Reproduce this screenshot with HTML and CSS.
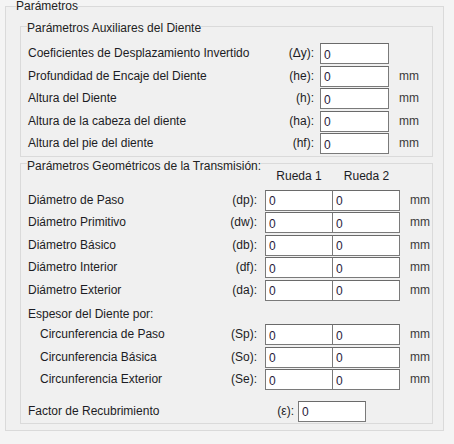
FILE: index.html
```html
<!DOCTYPE html>
<html lang="es">
<head>
  <meta charset="UTF-8">
  <title>Parámetros</title>
  <link rel="stylesheet" href="styles.css">
</head>
<body>

<fieldset class="group outer">
  <legend>Parámetros</legend>

  <fieldset class="group aux">
    <legend>Parámetros Auxiliares del Diente</legend>
    <div class="rows-aux">
      <span class="label">Coeficientes de Desplazamiento Invertido</span>
      <span class="code">(Δy):</span>
      <input class="box" type="text" value="0">
      <span class="unit"></span>

      <span class="label">Profundidad de Encaje del Diente</span>
      <span class="code">(he):</span>
      <input class="box" type="text" value="0">
      <span class="unit">mm</span>

      <span class="label">Altura del Diente</span>
      <span class="code">(h):</span>
      <input class="box" type="text" value="0">
      <span class="unit">mm</span>

      <span class="label">Altura de la cabeza del diente</span>
      <span class="code">(ha):</span>
      <input class="box" type="text" value="0">
      <span class="unit">mm</span>

      <span class="label">Altura del pie del diente</span>
      <span class="code">(hf):</span>
      <input class="box" type="text" value="0">
      <span class="unit">mm</span>
    </div>
  </fieldset>

  <fieldset class="group geo">
    <legend>Parámetros Geométricos de la Transmisión:</legend>
    <div class="rows-geo head">
      <span></span>
      <span></span>
      <span class="col-title">Rueda 1</span>
      <span class="col-title">Rueda 2</span>
      <span></span>
    </div>
    <div class="rows-geo">
      <span class="label">Diámetro de Paso</span>
      <span class="code">(dp):</span>
      <input class="box" type="text" value="0">
      <input class="box second" type="text" value="0">
      <span class="unit">mm</span>

      <span class="label">Diámetro Primitivo</span>
      <span class="code">(dw):</span>
      <input class="box" type="text" value="0">
      <input class="box second" type="text" value="0">
      <span class="unit">mm</span>

      <span class="label">Diámetro Básico</span>
      <span class="code">(db):</span>
      <input class="box" type="text" value="0">
      <input class="box second" type="text" value="0">
      <span class="unit">mm</span>

      <span class="label">Diámetro Interior</span>
      <span class="code">(df):</span>
      <input class="box" type="text" value="0">
      <input class="box second" type="text" value="0">
      <span class="unit">mm</span>

      <span class="label">Diámetro Exterior</span>
      <span class="code">(da):</span>
      <input class="box" type="text" value="0">
      <input class="box second" type="text" value="0">
      <span class="unit">mm</span>
    </div>

    <div class="subtitle">Espesor del Diente por:</div>
    <div class="rows-geo">
      <span class="label indent">Circunferencia de Paso</span>
      <span class="code">(Sp):</span>
      <input class="box" type="text" value="0">
      <input class="box second" type="text" value="0">
      <span class="unit">mm</span>

      <span class="label indent">Circunferencia Básica</span>
      <span class="code">(So):</span>
      <input class="box" type="text" value="0">
      <input class="box second" type="text" value="0">
      <span class="unit">mm</span>

      <span class="label indent">Circunferencia Exterior</span>
      <span class="code">(Se):</span>
      <input class="box" type="text" value="0">
      <input class="box second" type="text" value="0">
      <span class="unit">mm</span>
    </div>

    <div class="rows-factor">
      <span class="label">Factor de Recubrimiento</span>
      <span class="code">(ε):</span>
      <input class="box" type="text" value="0">
      <span></span>
    </div>
  </fieldset>
</fieldset>

</body>
</html>
```

FILE: styles.css
```css
body {
  margin: 0;
  background: #f4f4f4;
  font-family: "Liberation Sans", Arial, sans-serif;
  font-size: 12px;
  color: #1c1c24;
}
.group {
  border: 1px solid #dadada;
  background: #f0f0f0;
  margin: 0;
  min-width: 0;
}
.group legend {
  padding: 0;
  line-height: 14px;
  color: #222;
}
.outer {
  width: 439px;
  box-sizing: border-box;
  margin: -1px 0 0 5px;
  padding: 0 10px 6px 14px;
}
.outer > legend {
  margin-left: -4px;
}
.aux {
  margin-top: 4px;
  padding: 0 0 0 7px;
}
.aux > legend,
.geo > legend {
  margin-left: -1px;
  padding-top: 4px;
}
.geo {
  margin-top: -2px;
  padding: 0 0 0 7px;
}
.rows-aux {
  display: grid;
  grid-template-columns: 1fr 46px 69px 43px;
  grid-auto-rows: 22.5px;
  margin-top: 8px;
}
.rows-geo {
  display: grid;
  grid-template-columns: 1fr 44px 68px 67px 32px;
  grid-auto-rows: 22.5px;
}
.rows-geo.head {
  grid-auto-rows: 14px;
  margin-top: -4px;
  margin-bottom: 7px;
}
.rows-factor {
  display: grid;
  grid-template-columns: 1fr 36px 68px 66px;
  height: 22px;
  margin-top: 9px;
}
.label {
  line-height: 21px;
  white-space: nowrap;
}
.indent {
  padding-left: 12px;
}
.code {
  line-height: 21px;
  text-align: right;
  white-space: nowrap;
}
.rows-aux .code {
  padding-right: 6px;
}
.rows-geo .code {
  padding-right: 8px;
}
.rows-factor .code {
  padding-right: 4px;
}
.unit {
  line-height: 21px;
  padding-left: 10px;
  color: #3a3a3a;
}
.col-title {
  text-align: center;
  line-height: 14px;
}
.subtitle {
  line-height: 14px;
  margin: 5px 0 3px;
}
.box {
  box-sizing: border-box;
  width: 100%;
  height: 21px;
  margin: 0;
  padding: 2px 3px 0;
  border: 1px solid #7a7a7a;
  border-top-color: #6a6a6a;
  background: #fff;
  font-family: "Liberation Sans", Arial, sans-serif;
  font-size: 12px;
  color: #2a1a3a;
  outline: none;
}
.second {
  width: 68px;
  margin-left: -1px;
}
```
